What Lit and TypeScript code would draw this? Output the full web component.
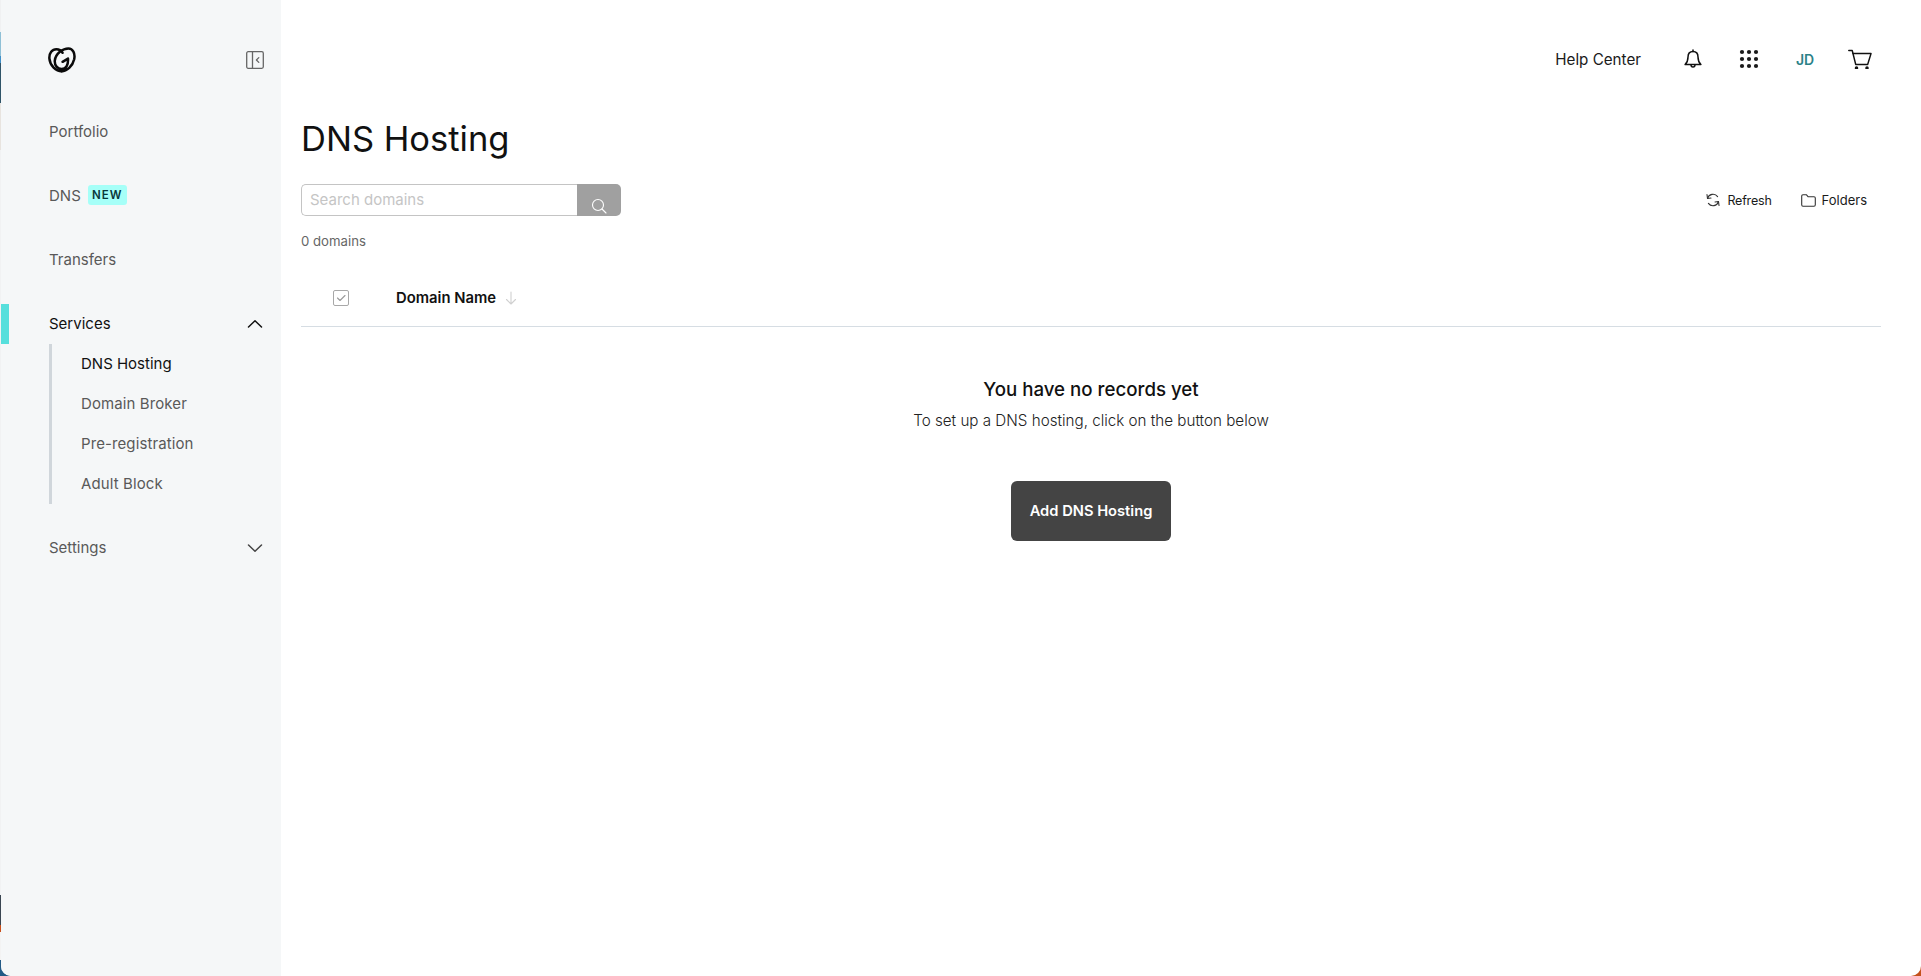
import { LitElement, html, css, svg } from "lit";
import { customElement } from "lit/decorators.js";

const chevron = (up: boolean) => html`<svg class="chev" width="16" height="10" viewBox="0 0 16 10" fill="none" stroke="currentColor" stroke-width="1.5" stroke-linecap="round" stroke-linejoin="round"><path d=${up ? "M1.5 8 8 1.8 14.5 8" : "M1.5 2 8 8.2 14.5 2"}></path></svg>`;

@customElement("app-root")
export class AppRoot extends LitElement {
  static styles = css`
    :host {
      display: block;
      height: 976px;
      font-family: "Inter", "Liberation Sans", sans-serif;
      color: #111;
      overflow: hidden;
      background:
        linear-gradient(
          180deg,
          #f0f1f2 0 32px,
          #8fc0d6 32px 56px,
          #3f8fc8 56px 63px,
          #2f5468 63px 103px,
          #e8e4df 103px 150px,
          #f1f2f3 150px 895px,
          #3a4652 895px 925px,
          #c9501c 925px 932px,
          #f3f3f3 932px 960px,
          #235a86 960px 976px
        ) left / 12px 100% no-repeat,
        linear-gradient(90deg, #235a86, #c4511c);
    }
    .shell {
      display: flex;
      height: 976px;
      margin-left: 1px;
      background: #fff;
      border-radius: 0 0 10px 10px;
      overflow: hidden;
    }
    .side {
      width: 280px;
      flex: none;
      background: #f5f7f8;
      display: flex;
      flex-direction: column;
      box-sizing: border-box;
      padding-top: 47px;
      font-size: 15px;
      color: #595959;
    }
    .brand {
      display: flex;
      align-items: center;
      justify-content: space-between;
      height: 26px;
      padding: 0 17px 0 48px;
      margin-bottom: 39px;
    }
    .logo { display: block; margin-left: -1px; }
    .nav { height: 40px; box-sizing: border-box; display: flex; align-items: center; padding: 0 17px 2px 48px; margin-bottom: 24px; position: relative; }
    .nav.open { color: #111; margin-bottom: 0; justify-content: space-between; }
    .nav.closed { margin-top: 24px; margin-bottom: 0; justify-content: space-between; }
    .nav.open::before { content: ""; position: absolute; left: 0; top: 0; width: 8px; height: 40px; background: #56dfdc; }
    .chev { color: #444; margin-right: 1px; position: relative; top: 1px; }
    .open .chev { color: #111; }
    .badge {
      margin-left: 7px;
      height: 20px;
      width: 39px;
      border-radius: 3px;
      background: #a6fff8;
      color: #09373a;
      font-size: 11.5px;
      font-weight: 600;
      letter-spacing: 1px;
      display: flex;
      align-items: center;
      justify-content: center;
    }
    .subs { margin-left: 48px; border-left: 3px solid #d0d6db; display: flex; flex-direction: column; }
    .sub { height: 40px; box-sizing: border-box; display: flex; align-items: center; padding: 0 0 2px 29px; letter-spacing: .1px; }
    .sub.on { color: #111; letter-spacing: 0; }
    .main { flex: 1; min-width: 0; display: flex; flex-direction: column; padding: 0 40px 0 20px; }
    .top {
      height: 118px;
      flex: none;
      display: flex;
      align-items: flex-start;
      justify-content: flex-end;
      padding-top: 47px;
      box-sizing: border-box;
      font-size: 15.2px;
    }
    .topitems { display: flex; align-items: center; height: 24px; margin-right: 8px; color: #1a1a1a; }
    .help { margin-right: 43px; }
    .topitems svg { display: block; }
    .bell { margin-right: 37px; }
    .dots { margin-right: 36px; }
    .jd { color: #2b8288; font-size: 14px; font-weight: 600; width: 20px; margin-right: 32px; padding-left: 1px; letter-spacing: 0; }
    .cart { margin-right: 1px; }
    h1 { margin: 0; font-size: 34.5px; font-weight: 400; line-height: 42px; height: 44px; color: #111; }
    .tools { display: flex; align-items: center; justify-content: space-between; margin-top: 22px; height: 32px; }
    .search { display: flex; width: 320px; height: 32px; }
    .input {
      width: 276px;
      box-sizing: border-box;
      border: 1.5px solid #c4c4c4;
      border-right: none;
      border-radius: 5px 0 0 5px;
      padding: 0 0 1px 8px;
      display: flex;
      align-items: center;
      font-size: 15px;
      color: #c5c5c5;
      background: #fff;
    }
    .btn { width: 44px; background: #a0a0a0; border-radius: 0 5px 5px 0; display: flex; align-items: flex-end; justify-content: center; padding-bottom: 2px; box-sizing: border-box; }
    .actions { display: flex; align-items: center; font-size: 13px; color: #1a1a1a; margin-right: 14px; }
    .act { display: flex; align-items: center; gap: 7px; }
    .act + .act { margin-left: 29px; gap: 6px; }
    .refresh-label { font-size: 12.5px; letter-spacing: -.2px; }
    .count { margin-top: 17px; font-size: 13.2px; line-height: 16px; color: #666; }
    .head {
      margin-top: 21px;
      height: 57px;
      box-sizing: border-box;
      border-bottom: 1px solid #d6dde3;
      display: flex;
      align-items: center;
      padding-left: 32px;
      font-size: 14.8px;
      font-weight: 600;
    }
    .check { width: 16px; height: 16px; box-sizing: border-box; border: 1.2px solid #a8a8a8; border-radius: 2px; display: flex; align-items: center; justify-content: center; margin-right: 47px; }
    .sort { margin-left: 9px; }
    .empty { display: flex; flex-direction: column; align-items: center; }
    h2 { margin: 48px 0 0; font-size: 18.7px; font-weight: 500; line-height: 30px; color: #111; }
    p { margin: 0.5px 0 0; font-size: 15.2px; font-weight: 300; line-height: 30px; color: #222; }
    .add {
      margin-top: 45px;
      width: 160px;
      height: 60px;
      display: flex;
      align-items: center;
      justify-content: center;
      border-radius: 6px;
      background: #444;
      color: #fff;
      font-size: 14.7px;
      font-weight: 600;
    }
  `;

  render() {
    return html`<div class="shell">
      <aside class="side">
        <div class="brand">
          <svg class="logo" width="28" height="26" viewBox="0 0 28 26" fill="none" stroke="#0a0a0a" stroke-width="2.5" stroke-linecap="round" stroke-linejoin="round">
            <path d="M13.6 24.200C8 24.200 2 18.600 1.400 11.600 1 6 4.200 2.200 8.400 2.200c2.800 0 5 1.600 6.200 3.600"></path>
            <path d="M13.600 24.200c5.200 0 11-5 12.600-12C27.400 6.200 24.800 1.400 20.400 1.400c-5.400 0-12.800 5-13.600 12.200-.4 5 2.800 8.400 6.800 8.400 4.600 0 6.800-4.200 6.400-10.400l-5.400 3.200"></path>
          </svg>
          <svg width="18" height="18" viewBox="0 0 18 18" fill="none" stroke="#666" stroke-width="1.300" stroke-linejoin="round" stroke-linecap="round">
            <rect x=".7" y=".7" width="16.600" height="16.600" rx="1.500"></rect>
            <path d="M6.500.7v16.600"></path>
            <path d="M12.800 6.600 10.400 9l2.400 2.400"></path>
          </svg>
        </div>
        <div class="nav">Portfolio</div>
        <div class="nav">DNS<span class="badge">NEW</span></div>
        <div class="nav">Transfers</div>
        <div class="nav open"><span>Services</span>${chevron(true)}</div>
        <div class="subs">
          <div class="sub on">DNS Hosting</div>
          <div class="sub">Domain Broker</div>
          <div class="sub">Pre-registration</div>
          <div class="sub">Adult Block</div>
        </div>
        <div class="nav closed"><span>Settings</span>${chevron(false)}</div>
      </aside>
      <main class="main">
        <div class="top">
          <div class="topitems">
            <span class="help">Help Center</span>
            <svg class="bell" width="18" height="20" viewBox="0 0 18 20" fill="none" stroke="#111" stroke-width="1.500" stroke-linejoin="round" stroke-linecap="round">
              <path d="M9 2.600c-3.300 0-5 2.500-5 5.500 0 4-1 5.700-2.900 7.500h15.800C15 13.800 14 12.100 14 8.100c0-3-1.700-5.500-5-5.500Z"></path>
              <path d="M9 2.600V1M7 15.800c0 3 4 3 4 0"></path>
            </svg>
            <svg class="dots" width="20" height="20" viewBox="0 0 20 20" fill="#1a1a1a">
              ${[3, 10, 17].map((y) => [3, 10, 17].map((x) => svg`<circle cx=${x} cy=${y} r="2.100"></circle>`))}
            </svg>
            <span class="jd">JD</span>
            <svg class="cart" width="24" height="20" viewBox="0 0 24 20" fill="none" stroke="#111" stroke-width="1.500" stroke-linejoin="round" stroke-linecap="round">
              <path d="M.8 1.400h3.400l3.500 14h11.600"></path>
              <path d="M5 4.600h18l-3.300 10.800"></path>
              <circle cx="8.500" cy="19" r="1" fill="#111"></circle>
              <circle cx="19" cy="19" r="1" fill="#111"></circle>
            </svg>
          </div>
        </div>
        <h1>DNS Hosting</h1>
        <div class="tools">
          <div class="search">
            <div class="input">Search domains</div>
            <div class="btn">
              <svg width="16" height="16" viewBox="0 0 16 16" fill="none" stroke="#fff" stroke-width="1.100" stroke-linecap="round">
                <circle cx="7" cy="7" r="5.500"></circle>
                <path d="m11 11 4 4"></path>
              </svg>
            </div>
          </div>
          <div class="actions">
            <span class="act">
              <svg width="14" height="14" viewBox="0 0 14 14" fill="none" stroke="#333" stroke-width="1.100" stroke-linecap="round" stroke-linejoin="round">
                <path d="M1.500 5.500A5.700 5.700 0 0 1 11.600 3.600"></path>
                <path d="M12.500 8.500A5.700 5.700 0 0 1 2.400 10.400"></path>
                <path d="M1 1.500 1.500 5.500 5 5M13 12.500l-.5-4-3.500.5"></path>
              </svg>
              <span class="refresh-label">Refresh</span>
            </span>
            <span class="act">
              <svg width="15" height="13" viewBox="0 0 15 13" fill="none" stroke="#333" stroke-width="1.100" stroke-linejoin="round">
                <path d="M.7 2c0-.7.5-1.300 1.300-1.300h3.300l1.700 2h6c.7 0 1.300.5 1.300 1.300v6.700c0 .8-.6 1.600-1.300 1.600H2c-.8 0-1.300-.8-1.300-1.600Z"></path>
              </svg>
              Folders
            </span>
          </div>
        </div>
        <div class="count">0 domains</div>
        <div class="head">
          <span class="check">
            <svg width="10" height="8" viewBox="0 0 10 8" fill="none" stroke="#9a9a9a" stroke-width="1.100" stroke-linecap="round" stroke-linejoin="round"><path d="m1.500 4 2.500 2.500 5-5"></path></svg>
          </span>
          <span>Domain Name</span>
          <svg class="sort" width="12" height="14" viewBox="0 0 12 14" fill="none" stroke="#d0d0d0" stroke-width="1.100" stroke-linecap="round" stroke-linejoin="round"><path d="M6 1v12M1.500 8.500 6 13l4.500-4.500"></path></svg>
        </div>
        <section class="empty">
          <h2>You have no records yet</h2>
          <p>To set up a DNS hosting, click on the button below</p>
          <div class="add">Add DNS Hosting</div>
        </section>
      </main>
    </div>`;
  }
}
